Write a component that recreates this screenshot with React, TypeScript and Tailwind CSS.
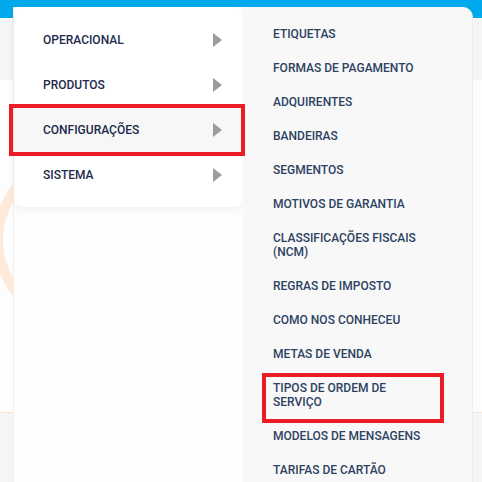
import React from 'react';

const mainItems = ['OPERACIONAL', 'PRODUTOS', 'CONFIGURAÇÕES', 'SISTEMA'];

const subItems = [
  'ETIQUETAS',
  'FORMAS DE PAGAMENTO',
  'ADQUIRENTES',
  'BANDEIRAS',
  'SEGMENTOS',
  'MOTIVOS DE GARANTIA',
  'CLASSIFICAÇÕES FISCAIS (NCM)',
  'REGRAS DE IMPOSTO',
  'COMO NOS CONHECEU',
  'METAS DE VENDA',
  'TIPOS DE ORDEM DE SERVIÇO',
  'MODELOS DE MENSAGENS',
  'TARIFAS DE CARTÃO',
];

function Caret() {
  return (
    <svg width="9" height="14" viewBox="0 0 9 14" className="shrink-0">
      <polygon points="0,0 9,7 0,14" fill="#9c9c9c" />
    </svg>
  );
}

export default function App() {
  const active = 'CONFIGURAÇÕES';
  const marked = 'TIPOS DE ORDEM DE SERVIÇO';

  return (
    <div className="relative w-[482px] h-[482px] overflow-hidden bg-[#f5f5f5] font-['Roboto',sans-serif]">
      {/* Page behind the menu */}
      <div className="h-[18px] bg-[#00a9ec]" />
      <div className="flex flex-col">
        <div className="h-[62px] bg-[#f5f5f5]" />
        <div className="relative h-[333px] overflow-hidden bg-[#fdfdfd] border-b border-[#fde3cf]">
          <svg width="200" height="333" className="block">
            <circle cx="80" cy="160" r="82" fill="none" stroke="#feeadb" strokeWidth="10" />
          </svg>
        </div>
        <div className="flex-1 bg-[#f6f6f6]" />
      </div>

      {/* Dropdown menu */}
      <nav className="absolute left-[13px] top-[7px] bottom-0 flex">
        <div className="w-[230px] bg-[#fdfdfd] border-l border-[#f0f0f0]">
          <ul className="bg-white rounded-[9px] shadow-[0_2px_8px_rgba(0,0,0,0.06)] py-[10px]">
            {mainItems.map((item) => (
              <li
                key={item}
                className={`relative flex items-center justify-between h-[45px] pl-[29px] pr-[21px] text-[12px] font-medium text-[#1d2a4c] ${
                  item === active ? 'bg-[#f7f7f7]' : ''
                }`}
              >
                <span>{item}</span>
                <Caret />
                {item === active && (
                  <span className="absolute -left-[5px] -right-[2px] -top-[3px] -bottom-[4px] border-[4px] border-[#ec1c24]" />
                )}
              </li>
            ))}
          </ul>
        </div>

        <ul className="w-[230px] bg-[#f8f8f8] rounded-tr-[10px] border-r border-[#ececec] pt-[10px] pl-[30px]">
          {subItems.map((item) => (
            <li
              key={item}
              className="relative py-[10px] w-[156px] text-[12px] leading-[14px] font-medium text-[#2d4262]"
            >
              {item}
              {item === marked && (
                <span className="absolute -left-[11px] top-[2px] w-[182px] h-[50px] border-[4px] border-[#ec1c24]" />
              )}
            </li>
          ))}
        </ul>
      </nav>
    </div>
  );
}
